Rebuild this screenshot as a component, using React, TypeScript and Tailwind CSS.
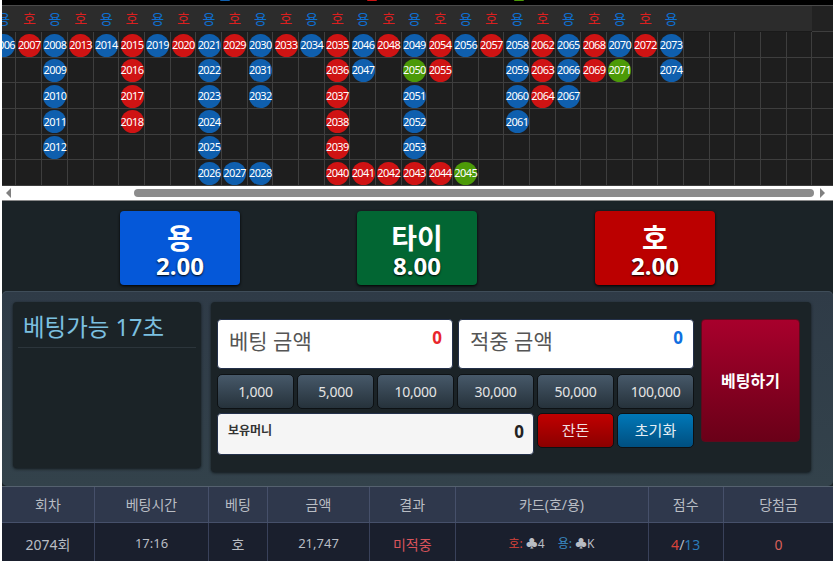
const font = '[font-family:"Noto_Sans","Noto_Sans_CJK_KR",sans-serif]'

// one string per column, top to bottom, "-" = empty cell
const columns = [
  ['b2006'],
  ['r2007'],
  ['b2008', 'b2009', 'b2010', 'b2011', 'b2012'],
  ['r2013'],
  ['b2014'],
  ['r2015', 'r2016', 'r2017', 'r2018'],
  ['b2019'],
  ['r2020'],
  ['b2021', 'b2022', 'b2023', 'b2024', 'b2025', 'b2026'],
  ['r2029', '-', '-', '-', '-', 'b2027'],
  ['b2030', 'b2031', 'b2032', '-', '-', 'b2028'],
  ['r2033'],
  ['b2034'],
  ['r2035', 'r2036', 'r2037', 'r2038', 'r2039', 'r2040'],
  ['b2046', 'b2047', '-', '-', '-', 'r2041'],
  ['r2048', '-', '-', '-', '-', 'r2042'],
  ['b2049', 'g2050', 'b2051', 'b2052', 'b2053', 'r2043'],
  ['r2054', 'r2055', '-', '-', '-', 'r2044'],
  ['b2056', '-', '-', '-', '-', 'g2045'],
  ['r2057'],
  ['b2058', 'b2059', 'b2060', 'b2061'],
  ['r2062', 'r2063', 'r2064'],
  ['b2065', 'b2066', 'b2067'],
  ['r2068', 'r2069'],
  ['b2070', 'g2071'],
  ['r2072'],
  ['b2073', 'b2074'],
  [], [], [], [], [], [],
]

const ballColor: Record<string, string> = {
  b: 'bg-[#0f5fae]',
  r: 'bg-[#cf1313]',
  g: 'bg-[#4c9a08]',
}

const chips = ['1,000', '5,000', '10,000', '30,000', '50,000', '100,000']

const tableCols = 'grid grid-cols-[93px_114px_59px_102px_85.5px_193px_75.5px_1fr]'

function Ball({ code }: { code?: string }) {
  if (!code || code === '-') return null
  return (
    <div className={`flex h-[23px] w-[23px] items-center justify-center rounded-full text-[11px] tracking-[-0.6px] text-white ${ballColor[code[0]]}`}>
      {code.slice(1)}
    </div>
  )
}

function TopBar() {
  return (
    <div className="flex h-[5px] bg-black">
      <div className="ml-[218px] h-px w-[10px] rounded-b-full bg-[#0f5fae]" />
      <div className="ml-[137px] h-px w-[10px] rounded-b-full bg-[#cf1313]" />
      <div className="ml-[137px] h-px w-[10px] rounded-b-full bg-[#4c9a08]" />
    </div>
  )
}

function Road() {
  return (
    <div className="h-[180px] overflow-hidden bg-[#1e1e1e]">
      <div className="-ml-[11.2px] flex w-[900px]">
        {columns.map((col, i) => (
          <div key={i} className="w-[25.68px] shrink-0">
            <div className={`flex h-[26px] items-center justify-center border-b text-[14px] ${i < 32 ? 'border-[#1a1a1a] bg-[#2c2c2c]' : 'border-[#3e3e3e] bg-[#222]'}`}>
              {i <= 26 && (
                <span className={i % 2 === 0 ? 'text-[#0f6fd0]' : 'text-[#d92020]'}>
                  {i % 2 === 0 ? '용' : '호'}
                </span>
              )}
            </div>
            {[0, 1, 2, 3, 4, 5].map((r) => (
              <div key={r} className="flex h-[25.67px] justify-center border-r border-b border-[#3e3e3e] pt-[1.5px] pl-px">
                <Ball code={col[r]} />
              </div>
            ))}
          </div>
        ))}
      </div>
    </div>
  )
}

function Scrollbar() {
  return (
    <div className="flex h-[14px] items-center bg-white">
      <svg width="8" height="10" viewBox="0 0 8 10" className="ml-[3px] shrink-0">
        <polygon points="6,0 6,10 1,5" fill="#808080" />
      </svg>
      <div className="ml-[121px] h-[8px] w-[680px] rounded-full bg-[#8c8c8c]" />
      <svg width="8" height="10" viewBox="0 0 8 10" className="ml-[4px] shrink-0">
        <polygon points="2,0 2,10 7,5" fill="#808080" />
      </svg>
    </div>
  )
}

function OddsButton({ label, odds, color, className = '' }: { label: string; odds: string; color: string; className?: string }) {
  return (
    <button className={`flex h-[74px] w-[120px] flex-col items-center justify-center rounded-[4px] pt-[6px] text-white shadow-[0_1px_3px_#000] ${color} ${className}`}>
      <span className="text-[28px] leading-[30px] font-bold">{label}</span>
      <span className="text-[24px] leading-[26px] font-bold [text-shadow:0_1px_2px_#000]">{odds}</span>
    </button>
  )
}

function AmountBox({ label, color }: { label: string; color: string }) {
  return (
    <div className="relative h-[50px] flex-1 rounded-[4px] border border-[#23304a] bg-white pt-[4px] pl-[11px]">
      <span className="text-[21px] leading-[34px] text-[#555]">{label}</span>
      <span className={`absolute top-[5px] right-[10px] text-[17px] font-bold ${color}`}>0</span>
    </div>
  )
}

function BetPanel() {
  return (
    <div className="flex h-[195px] gap-[10px] rounded-[5px] bg-gradient-to-b from-[#2f3b47] to-[#33424b] pt-[11px] pl-[11px] shadow-[inset_0_1px_0_#3f4d59]">
      <div className="h-[166px] w-[188px] rounded-[4px] bg-[#1b2327] px-[5px] pt-[8px] shadow-[0_1px_3px_#11181c]">
        <div className="border-b border-[#2c353b] pb-[3px] pl-[5px] text-[23.5px] leading-[34px] text-[#7cc0e0]">
          베팅가능 17초
        </div>
      </div>
      <div className="flex h-[170px] w-[600px] gap-[7px] rounded-[4px] bg-[#1b2327] pt-[17px] pl-[6px] shadow-[0_1px_3px_#11181c]">
        <div className="flex w-[477px] flex-col">
          <div className="flex gap-[5px]">
            <AmountBox label="베팅 금액" color="text-[#e8262c]" />
            <AmountBox label="적중 금액" color="text-[#0f6fe0]" />
          </div>
          <div className="mt-[5px] grid grid-cols-6 gap-[3px]">
            {chips.map((c) => (
              <button
                key={c}
                className="h-[35px] rounded-[5px] border border-[#0d1114] bg-gradient-to-b from-[#47596a] to-[#26323b] text-[14px] tracking-[-0.3px] text-[#e4e4e4]"
              >
                {c}
              </button>
            ))}
          </div>
          <div className="mt-[4px] grid grid-cols-6 gap-[3px]">
            <div className="relative col-span-4 h-[42px] rounded-[4px] border border-[#23304a] bg-[#f5f5f5] pt-[3px] pl-[10px]">
              <span className="text-[12px] leading-[20px] font-bold text-[#333]">보유머니</span>
              <span className="absolute top-[5px] right-[9px] text-[17px] font-bold text-[#222]">0</span>
            </div>
            <button className="h-[35px] rounded-[5px] border border-[#0d1114] bg-gradient-to-b from-[#c10000] to-[#8b0000] text-[15px] text-[#f0e0e0]">
              잔돈
            </button>
            <button className="h-[35px] rounded-[5px] border border-[#0d1114] bg-gradient-to-b from-[#0078b8] to-[#004f80] text-[15px] text-[#e4eef4]">
              초기화
            </button>
          </div>
        </div>
        <button className="h-[123px] w-[99px] shrink-0 rounded-[4px] border border-[#5c0a1c] bg-gradient-to-b from-[#a8002c] to-[#6a0018] text-[16px] font-bold text-white">
          베팅하기
        </button>
      </div>
    </div>
  )
}

const headCell = 'flex items-center justify-center border-r border-[#46506a]'
const rowCell = 'flex items-center justify-center border-r border-[#39415a]'

function History() {
  return (
    <div className="text-[14px] text-[#b9bdc4]">
      <div className={`${tableCols} h-[37px] border-t border-[#55616f] border-b border-b-[#46506a] bg-[#2f384c]`}>
        {['회차', '베팅시간', '베팅', '금액', '결과', '카드(호/용)', '점수'].map((h) => (
          <div key={h} className={headCell}>{h}</div>
        ))}
        <div className="flex items-center justify-center">당첨금</div>
      </div>
      <div className={`${tableCols} h-[42px] bg-[#1a1f2d]`}>
        <div className={rowCell}>2074회</div>
        <div className={`${rowCell} text-[13px]`}>17:16</div>
        <div className={rowCell}>호</div>
        <div className={`${rowCell} text-[13px]`}>21,747</div>
        <div className={`${rowCell} text-[#d8535b]`}>미적중</div>
        <div className={`${rowCell} gap-[13px] text-[12px]`}>
          <span><span className="text-[#d9433a]">호:</span> ♣4</span>
          <span><span className="text-[#3b8ec9]">용:</span> ♣K</span>
        </div>
        <div className={rowCell}>
          <span className="text-[#d9433a]">4</span>/<span className="text-[#2b7ab8]">13</span>
        </div>
        <div className="flex items-center justify-center text-[#d9605a]">0</div>
      </div>
    </div>
  )
}

export default function App() {
  return (
    <div className={`h-[561px] w-[835px] overflow-hidden bg-white px-[2px] ${font}`}>
      <TopBar />
      <div className="h-px bg-[#4a4a4a]" />
      <Road />
      <Scrollbar />
      <div className="h-px bg-[#8a8a8a]" />
      <div className="bg-[#1b2327]">
        <div className="flex h-[90px] items-start gap-[117px] pt-[10px] pl-[118px]">
          <OddsButton label="용" odds="2.00" color="bg-[#0558d9]" />
          <OddsButton label="타이" odds="8.00" color="bg-[#026633]" />
          <OddsButton label="호" odds="2.00" color="bg-[#bb0000]" className="ml-px" />
        </div>
        <BetPanel />
        <History />
      </div>
    </div>
  )
}
